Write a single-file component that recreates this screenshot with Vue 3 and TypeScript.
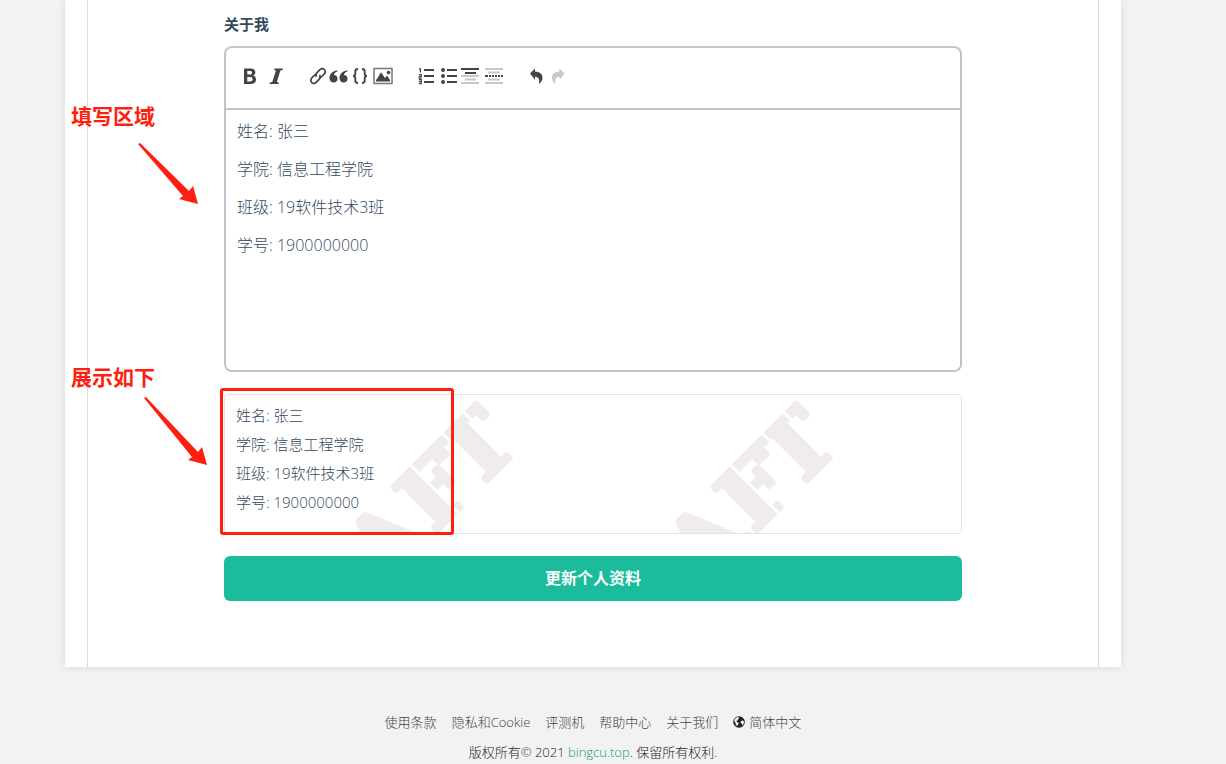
<script setup lang="ts">
import { ref, computed } from 'vue'

const about = ref('姓名: 张三\n学院: 信息工程学院\n班级: 19软件技术3班\n学号: 1900000000')
const previewLines = computed(() => about.value.split('\n'))
const footerLinks: string[] = ['使用条款', '隐私和Cookie', '评测机', '帮助中心', '关于我们']
const stamps: number[] = [159, 479]
</script>

<template>
  <div class="page">
    <main class="card">
      <div class="panel">
        <form class="form" @submit.prevent>
          <label class="title" for="about">关于我</label>
          <div class="editor">
            <div class="toolbar">
              <div class="group styles">
                <button type="button" aria-label="粗体">
                  <svg viewBox="0 0 22 22"><path fill-rule="evenodd" d="M6 3.500h6.500c3.200 0 4.800 1.500 4.800 3.800 0 1.700-.8 2.800-2.200 3.300 1.900.5 2.900 1.800 2.900 3.900 0 2.800-2 4.500-5.300 4.500H6zM9.300 6v3.600h2.300c1.600 0 2.400-.6 2.400-1.900 0-1.200-.8-1.700-2.400-1.700zm0 6v4.400h2.800c1.600 0 2.500-.8 2.500-2.200s-.9-2.200-2.500-2.200z" /></svg>
                </button>
                <button type="button" aria-label="斜体">
                  <svg viewBox="0 0 22 22"><path d="M10.500 3.500H19l-.4 1.500-2.200.4-3.600 11.600 2 .5-.4 1.500H5.500l.4-1.500 2.400-.5L11.900 5.400l-1.800-.4z" /></svg>
                </button>
              </div>
              <div class="group">
                <button type="button" aria-label="链接">
                  <svg viewBox="0 0 22 22"><g class="line" stroke-width="1.700"><path d="M9.500 11.800C8.200 10.300 8.600 9 10 7.600l2.400-2.500C14 3.500 16 3.200 17.300 4.500s1.100 3.300-.4 4.800L14.300 12c-.8.800-1.600 1.100-2.500 1" /><path d="M12.400 10.200c1.300 1.400 1 2.900-.3 4.200l-2.500 2.500c-1.600 1.600-3.600 1.900-4.900.6s-1.100-3.300.4-4.800l2.600-2.700c.8-.8 1.500-1.100 2.400-1" /></g></svg>
                </button>
                <button type="button" aria-label="引用">
                  <svg viewBox="0 0 22 22"><path d="M8.300 5.200C3.500 6 .5 9 .5 13c0 2.700 1.700 4.500 4.100 4.500 2.300 0 4-1.600 4-3.800s-1.500-3.700-3.700-3.700c.5-1.700 1.600-3 3.600-3.700z" /><path d="M18.300 5.200c-4.800.8-7.800 3.800-7.800 7.800 0 2.700 1.700 4.500 4.100 4.500 2.300 0 4-1.600 4-3.800s-1.500-3.700-3.700-3.700c.5-1.700 1.600-3 3.600-3.700z" /></svg>
                </button>
                <button type="button" aria-label="代码">
                  <svg viewBox="0 0 22 22"><g class="line" stroke-width="1.900"><path d="M7 4C4.900 4 4.300 4.700 4.300 6.500v2c0 1.600-.6 2.500-2.300 2.500 1.700 0 2.300.9 2.300 2.500v2c0 1.800.6 2.500 2.700 2.500" /><path d="M11 4c2.100 0 2.700.7 2.700 2.500v2c0 1.600.6 2.500 2.300 2.500-1.700 0-2.300.9-2.300 2.500v2c0 1.800-.6 2.500-2.700 2.500" /></g></svg>
                </button>
                <button type="button" aria-label="图片">
                  <svg viewBox="0 0 22 22"><rect class="frame" x="1" y="3.500" width="18" height="15" /><path d="M3 16.500v-1.600l1.500-1.600 3.500-6 4 5.700 2-2.500 3 4.500v1.500z" /><circle cx="15.500" cy="7.500" r="1.800" /></svg>
                </button>
              </div>
              <div class="group">
                <button type="button" aria-label="编号列表">
                  <svg viewBox="0 0 22 22"><path d="M8 4h10v2H8zm0 6h10v2H8zm0 6h10v2H8z" /><path class="line" stroke-width="1.200" d="M3 3.800h1.400V7.500M2.800 9.500h2.500v1.800H3.300v1.900h2.300M2.800 14.700h2.500v3.900H2.800m0-2h2.500" /></svg>
                </button>
                <button type="button" aria-label="项目列表">
                  <svg viewBox="0 0 22 22"><path d="M9 4h10v2H9zm0 6h10v2H9zm0 6h10v2H9z" /><circle cx="5" cy="5" r="2" /><circle cx="5" cy="11" r="2" /><circle cx="5" cy="17" r="2" /></svg>
                </button>
                <button type="button" aria-label="标题">
                  <svg viewBox="0 0 22 22"><path d="M1 3h18v2H1zm4 4h11v2H5z" /><path class="pale" d="M1 10h18v2H1zm4 3.500h11v2H5zM1 17h18v2H1z" /></svg>
                </button>
                <button type="button" aria-label="分隔线">
                  <svg viewBox="0 0 22 22"><path class="pale" d="M3 3h18v2H3zm3 3.500h12v2H6zm0 7h12v2H6zM3 17h18v2H3z" /><path d="M3 10h3v2H3zm4 0h2v2H7zm3 0h2v2h-2zm3 0h2v2h-2zm3 0h2v2h-2zm3 0h2v2h-2z" /></svg>
                </button>
              </div>
              <div class="group">
                <button type="button" aria-label="撤销">
                  <svg viewBox="0 0 22 22"><path d="M5 8.500 10 3.500V6.500c5 .2 7.500 2.700 7.500 6.300 0 2.800-1.300 4.700-3.700 6.200 1.200-4.200.1-7-3.800-7.200v3z" /></svg>
                </button>
                <button type="button" aria-label="重做">
                  <svg viewBox="0 0 22 22"><path class="pale" d="M17.500 8.500l-5-5V6.500C7.500 6.700 5 9.200 5 12.800c0 2.800 1.300 4.700 3.700 6.200-1.200-4.200-.1-7 3.800-7.200v3z" /></svg>
                </button>
              </div>
            </div>
            <textarea id="about" v-model="about" rows="6" spellcheck="false"></textarea>
          </div>

          <section class="preview">
            <svg class="watermark" aria-hidden="true">
              <g v-for="x in stamps" :key="x" :transform="`translate(${x} 192) rotate(-45)`">
                <text x="0 73 132" y="-2">AFT</text>
                <path d="M105 -70V2M150 -70V-40M180 -70V-40" />
              </g>
            </svg>
            <p v-for="(line, i) in previewLines" :key="i">{{ line }}</p>
            <div class="highlight"></div>
          </section>

          <button class="submit" type="submit">更新个人资料</button>

          <div class="note note-input">
            <strong>填写区域</strong>
            <svg viewBox="0 0 140 100"><path d="M67 43 69 42 118 90 122 85 127 103 108 98 112 95Z" /></svg>
          </div>
          <div class="note note-output">
            <strong>展示如下</strong>
            <svg viewBox="0 0 140 110"><path d="M73 36 75 35 127 90 131 85 136 103 117 98 121 95Z" /></svg>
          </div>
        </form>
      </div>
    </main>

    <footer class="footer">
      <nav>
        <a v-for="link in footerLinks" :key="link" href="#">{{ link }}</a>
        <a class="language" href="#">
          <svg viewBox="0 0 12 12"><circle cx="6" cy="6" r="5.800" /><path d="M1.500 3.500 3.200 1.800 5.300 1l1 .9-1.500 1.300.3.900-1.600.8.200 1 1.600.6.500 1.200-1.300 1.400-.3 1.200L2.700 8.500 2.500 6.500 1.300 5.300zM8 5l1.800-.5 1.200 1-.3 2.200-1.300 1.500-.7-1.600L7.500 6.500z" /></svg>
          简体中文
        </a>
      </nav>
      <p>版权所有© 2021 <a class="site" href="#">bingcu.top</a>. 保留所有权利.</p>
    </footer>
  </div>
</template>

<style>
body {
  margin: 0;
  background: #f2f2f2;
}
</style>

<style scoped>
* {
  box-sizing: border-box;
}
.page {
  min-height: 100vh;
  padding: 0 40px 0 0;
  overflow: hidden;
  font-family: "Open Sans", "Noto Sans CJK SC", sans-serif;
  font-weight: 300;
  color: #34495e;
}
.card {
  max-width: 1056px;
  margin: 0 auto;
  padding: 0 22px;
  background: #fff;
  box-shadow: 0 0 8px rgba(0, 0, 0, 0.1);
}
.panel {
  padding: 14px 24px 66px;
  border: solid #dcdcdc;
  border-width: 0 1px;
}
.form {
  position: relative;
  max-width: 738px;
  margin: 0 auto;
}
.title {
  display: block;
  margin-bottom: 12px;
  font-size: 15px;
  line-height: 20px;
  font-weight: 700;
}
.editor {
  border: 2px solid #bdc3c7;
  border-top-color: #c8c8c8;
  border-radius: 8px;
  overflow: hidden;
}
.toolbar {
  display: flex;
  gap: 21px;
  height: 62px;
  padding: 17px 12px;
  border-bottom: 2px solid #bdc3c7;
}
.group {
  display: flex;
}
.styles {
  gap: 4px;
}
.toolbar button {
  width: 22px;
  height: 22px;
  padding: 0;
  border: 0;
  background: none;
}
.toolbar svg {
  display: block;
  width: 22px;
  height: 22px;
  fill: #444;
}
.toolbar .line {
  fill: none;
  stroke: #444;
}
.toolbar .frame {
  fill: none;
  stroke: #777;
  stroke-width: 1.500;
}
.toolbar .pale {
  fill: #c8c8c8;
}
textarea {
  display: block;
  width: 100%;
  height: 260px;
  padding: 2px 11px;
  border: 0;
  outline: 0;
  resize: none;
  background: #fff;
  color: #34495e;
  font: inherit;
  font-size: 16px;
  line-height: 38px;
}
.preview {
  position: relative;
  margin-top: 22px;
  padding: 6px 11px 16px;
  border: 1px solid #e3e3e3;
  border-radius: 4px;
}
.preview p {
  position: relative;
  margin: 0;
  font-size: 15px;
  line-height: 29px;
}
.watermark {
  position: absolute;
  inset: 0;
  width: 100%;
  height: 100%;
  overflow: hidden;
}
.watermark text {
  fill: #f0ecee;
  stroke: #f0ecee;
  stroke-width: 5;
  stroke-linejoin: round;
  font-family: "DejaVu Serif", serif;
  font-size: 86px;
  font-weight: 700;
}
.watermark path {
  stroke: #fff;
  stroke-width: 3;
}
.highlight {
  position: absolute;
  inset: -7px auto -2px -5px;
  width: 234px;
  border: 3px solid #ff1f10;
  border-radius: 3px;
}
.submit {
  display: block;
  width: 100%;
  margin-top: 22px;
  padding: 0;
  border: 0;
  border-radius: 6px;
  background: #1abc9c;
  color: #fff;
  font: inherit;
  font-size: 16px;
  font-weight: 700;
  line-height: 45px;
}
.note {
  position: absolute;
  left: -153px;
  color: #ff1f10;
  font-size: 21px;
  line-height: 30px;
  pointer-events: none;
}
.note-input {
  top: 87px;
}
.note-output {
  top: 348px;
}
.note strong {
  font-weight: 700;
}
.note svg {
  position: absolute;
  top: 0;
  left: 0;
  width: 140px;
  overflow: visible;
  fill: #ff1f10;
}
.footer {
  padding-top: 40px;
  text-align: center;
  font-size: 13px;
  line-height: 30px;
  color: #222;
}
.footer nav {
  display: flex;
  justify-content: center;
  gap: 15px;
}
.footer a {
  color: #444;
  text-decoration: none;
}
.footer .language {
  display: flex;
  align-items: center;
  gap: 4px;
}
.language svg {
  width: 12px;
  height: 12px;
  fill: #222;
}
.language path {
  fill: #f2f2f2;
}
.footer p {
  margin: 0;
}
.footer .site {
  color: #16987e;
}
</style>
